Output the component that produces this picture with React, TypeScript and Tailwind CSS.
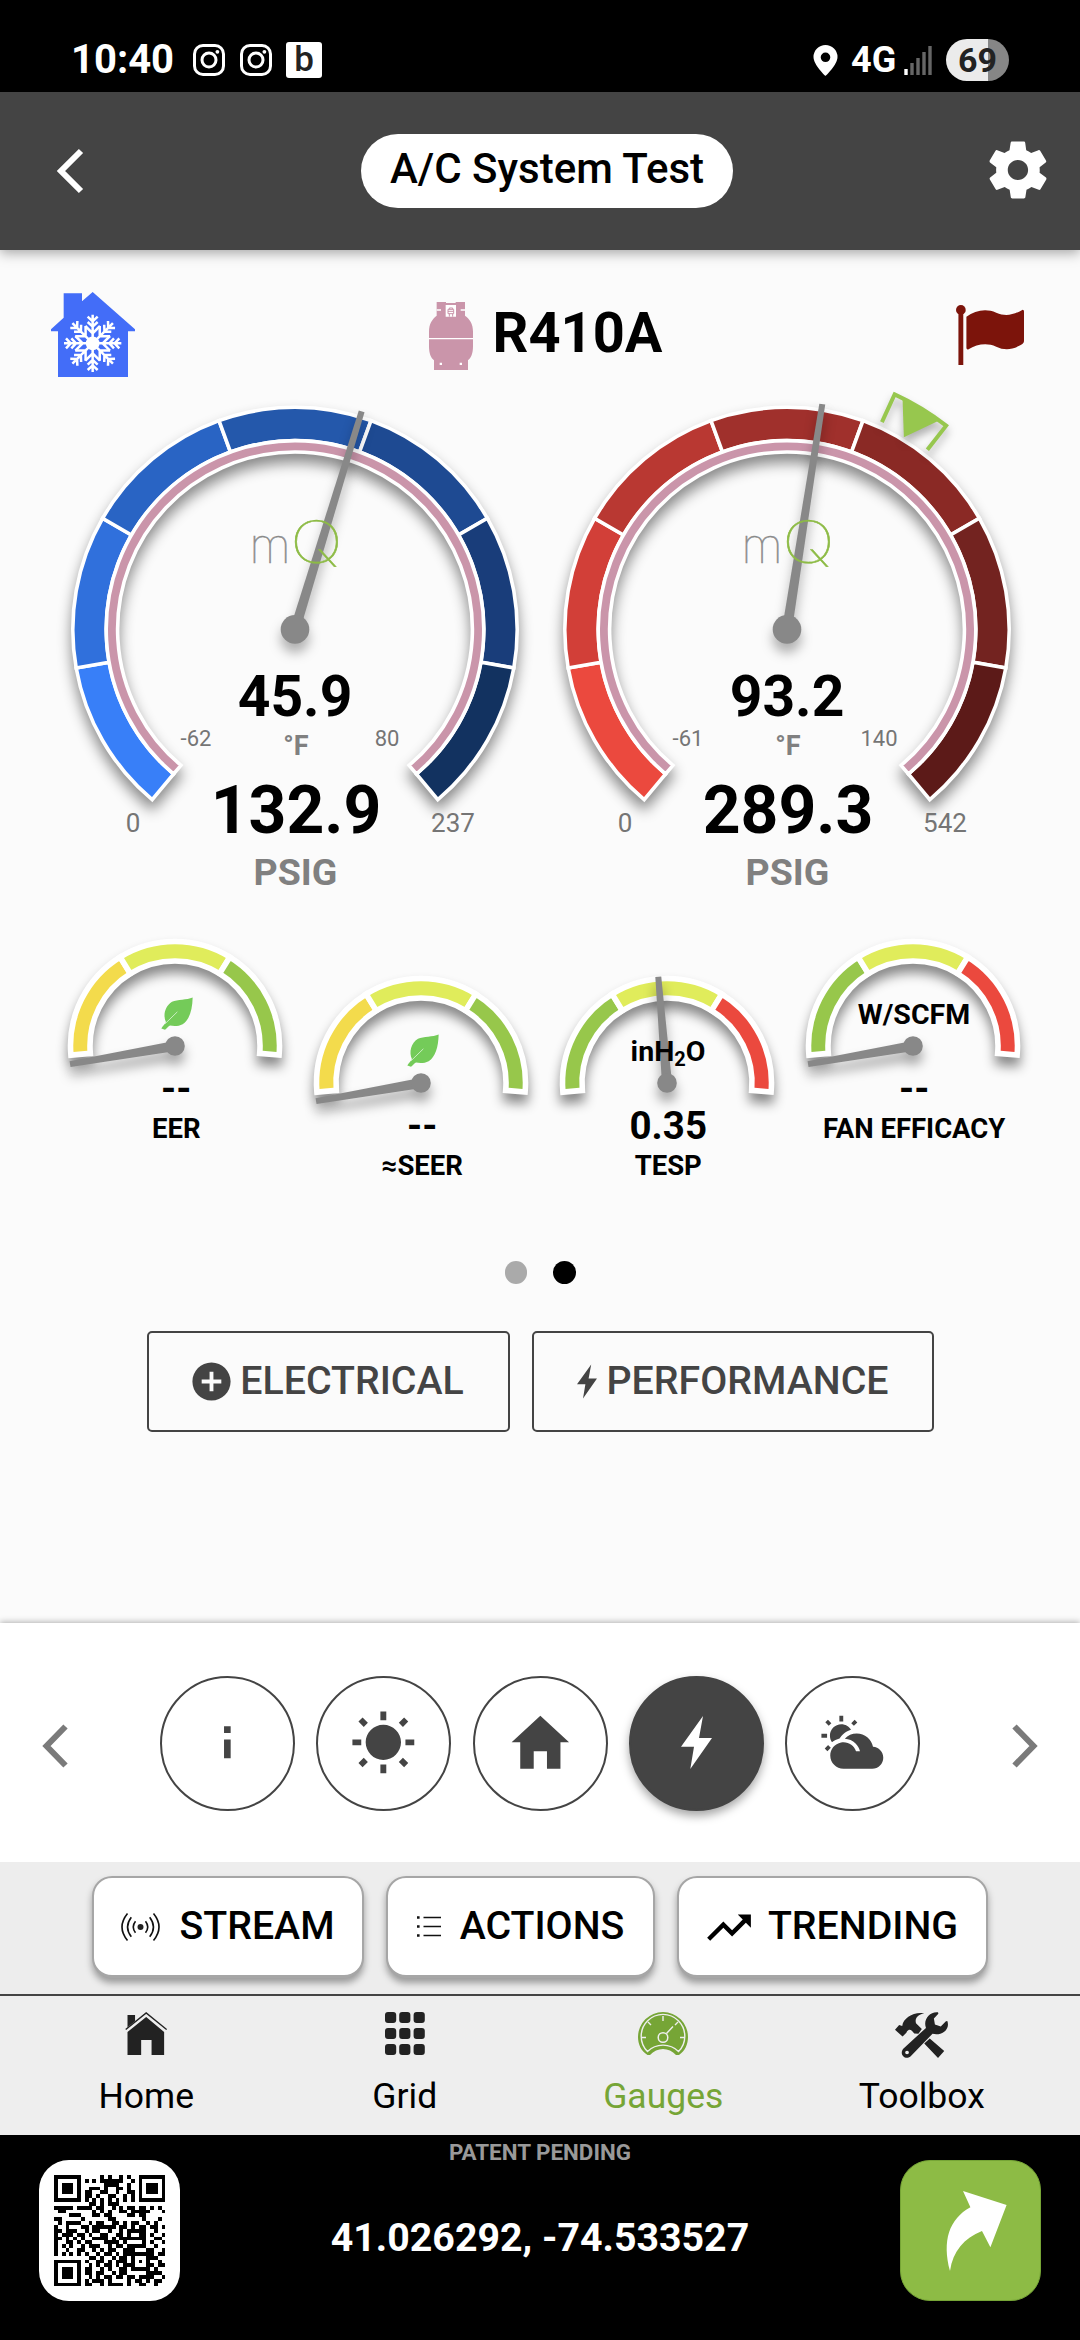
import type { ReactNode } from 'react';
import {
  IoMdAddCircle,
  IoMdHome,
  IoMdInformation,
  IoMdPartlySunny,
  IoMdSettings,
  IoMdSunny,
  IoMdTrendingUp,
} from 'react-icons/io';

const BLUES = ['#387ff8', '#3070dc', '#2964c4', '#2458ab', '#1e4a92', '#193d7a', '#123260'];
const REDS = ['#eb493e', '#d23f38', '#b93832', '#a0302c', '#8a2925', '#732320', '#5c1a18'];
const REFRIGERANT = '#ca95aa';

function polar(r: number, deg: number) {
  const a = (deg * Math.PI) / 180;
  return `${(r * Math.sin(a)).toFixed(2)} ${(-r * Math.cos(a)).toFixed(2)}`;
}

// ring segment, angles in degrees clockwise from 12 o'clock
function segment(r0: number, r1: number, from: number, to: number) {
  const large = to - from > 180 ? 1 : 0;
  return `M${polar(r1, from)} A${r1} ${r1} 0 ${large} 1 ${polar(r1, to)} L${polar(r0, to)} A${r0} ${r0} 0 ${large} 0 ${polar(r0, from)} Z`;
}

interface GaugeProps {
  colors: string[];
  angle: number;
  temp: string;
  tempMin: string;
  tempMax: string;
  pressure: string;
  max: string;
  target?: [number, number];
}

function Gauge({ colors, angle, temp, tempMin, tempMax, pressure, max, target }: GaugeProps) {
  return (
    <svg className="w-[492px] h-[530px] shrink-0 overflow-visible" viewBox="-246 -249.4 492 530" textAnchor="middle">
      <g className="drop-shadow-[0_9px_7px_rgba(0,0,0,0.45)]" stroke="#fff" strokeWidth="3.6">
        {colors.map((c, i) => (
          <path key={c} d={segment(188.8, 222.2, -140 + i * 40, -100 + i * 40)} fill={c} />
        ))}
        <path d={segment(177.4, 188.8, -140, 140)} fill={REFRIGERANT} />
      </g>
      {target && (
        <g className="drop-shadow-[0_6px_4px_rgba(0,0,0,0.3)]">
          <path
            d={`M${polar(228, target[0])} L${polar(258.5, target[0])} A258.5 258.5 0 0 1 ${polar(258.5, target[1])} L${polar(228, target[1])}`}
            fill="none"
            stroke="#97c74e"
            strokeWidth="4"
          />
          <path
            d={`M${polar(258, target[0] + 2)} A258 258 0 0 1 ${polar(258, target[1] - 2)} L${polar(225, (target[0] + target[1]) / 2)} Z`}
            fill="#97c74e"
          />
        </g>
      )}
      <g className="drop-shadow-[0_9px_6px_rgba(0,0,0,0.3)]" fill="#888">
        <path d="M-5 0 L-3 -228 L3 -228 L5 0 Z" transform={`rotate(${angle})`} />
        <circle r="14.3" />
      </g>
      <g className="font-['Inter',sans-serif] font-thin" strokeWidth="0.5">
        <text x="-25" y="-66.5" fontSize="48" fill="#8a8a8a" stroke="#8a8a8a">m</text>
        <text transform="translate(21.500 -66.500) scale(1.220 1)" fontSize="58" fill="#8dbb45" stroke="#8dbb45">Q</text>
      </g>
      <g className="font-bold">
        <text x="0" y="86.5" fontSize="57">{temp}</text>
        <text x="1" y="126" fontSize="27" fill="#808080">°F</text>
        <text x="1" y="204" fontSize="66">{pressure}</text>
        <text x="0.5" y="255.5" fontSize="37.5" fill="#808080">PSIG</text>
      </g>
      <g fill="#757575">
        <text x="-99" y="117" fontSize="22">{tempMin}</text>
        <text x="92" y="117" fontSize="22">{tempMax}</text>
        <text x="-162" y="203" fontSize="26">0</text>
        <text x="158" y="203" fontSize="26">{max}</text>
      </g>
    </svg>
  );
}

function Leaf() {
  return (
    <svg className="w-8 h-[33px]" viewBox="362 232 96 98">
      <path
        d="M457 233c-1 38-10 68-30 80-13 7-28 6-38 4-5 2-10 10-15 13l-11-4c4-8 10-12 14-19-10-20-3-48 18-61 17-8 44-5 62-13z"
        fill="#74cb59"
      />
      <path d="M374 312 411 276" stroke="#c9ecc0" strokeWidth="3" />
    </svg>
  );
}

interface MiniProps {
  colors: string[];
  angle: number;
  value: string;
  label: string;
  inner: ReactNode;
  leaf?: boolean;
  lowered?: boolean;
}

function MiniGauge({ colors, angle, value, label, inner, leaf, lowered }: MiniProps) {
  return (
    <div className={`w-[246px] flex flex-col items-center ${lowered ? 'pt-[37.3px]' : ''}`}>
      <div className="relative">
        <svg className="w-[246px] h-[126px] overflow-visible block" viewBox="-123 -112 246 126">
          <g className="drop-shadow-[0_9px_6px_rgba(0,0,0,0.45)]" stroke="#fff" strokeWidth="5.6">
            {colors.map((c, i) => (
              <path key={c} d={segment(85, 104.5, -95 + i * 63.33, -95 + (i + 1) * 63.33)} fill={c} />
            ))}
          </g>
          <g className="drop-shadow-[0_9px_6px_rgba(0,0,0,0.35)]" fill="#888">
            <path d="M-5 0 L-3 -106.5 L3 -106.5 L5 0 Z" transform={`rotate(${angle})`} />
            <circle r="9.8" />
          </g>
        </svg>
        <div className={`absolute inset-x-0 flex justify-center ${leaf ? 'top-[63.5px] pl-[3px]' : 'top-[64px] pl-0.5'}`}>
          {inner}
        </div>
      </div>
      <div className="pl-[2.5px] h-[53px] leading-[58px] text-[38.5px] font-bold">{value}</div>
      <div className="pl-[2.5px] leading-[31px] text-[27.5px] font-bold whitespace-nowrap">{label}</div>
    </div>
  );
}

function Header() {
  return (
    <>
      <div className="h-[92px] bg-black text-white flex items-center justify-between pl-[71px] pr-[71px] pt-[28px]">
        <div className="flex items-center">
          <span className="text-[40px] leading-none font-bold w-[122px]">10:40</span>
          <Insta />
          <Insta />
          <span className="w-9 h-9 bg-white text-[#222] rounded-[3px] text-[35px] leading-9 text-center font-medium">b</span>
        </div>
        <div className="flex items-center">
          <svg className="w-[25px] h-[31px] mr-[13px]" viewBox="0 0 25 31">
            <path fillRule="evenodd" fill="#fff" d="M12.5 0A12 12 0 0 0 .5 12c0 8 12 19 12 19s12-11 12-19a12 12 0 0 0-12-12zm0 7.5a4.8 4.8 0 1 1 0 9.6 4.8 4.8 0 0 1 0-9.6z" />
          </svg>
          <span className="text-[36px] leading-none font-bold w-[53px]">4G</span>
          <svg className="w-[28px] h-[29px] mr-[14px]" viewBox="0 0 28 29">
            <path d="M2 23v6" stroke="#fff" strokeWidth="3.4" />
            <path d="M8 17v12M14 12v17M20 6v23M26 0v29" stroke="#666" strokeWidth="3.4" />
          </svg>
          <span className="w-[63px] h-[42px] rounded-full bg-linear-to-r from-[#ebebeb] from-67% to-[#868686] to-67% text-[#222] text-[34px] leading-[43px] text-center font-bold">
            69
          </span>
        </div>
      </div>
      <header className="relative h-[158px] bg-[#444] flex items-center justify-between pl-[56px] pr-[27px] shadow-[0_3px_12px_rgba(0,0,0,0.35)]">
        <svg className="w-[55px] h-[46px] mt-[-1px]" viewBox="0 0 55 46" fill="none" stroke="#fff" strokeWidth="6">
          <path d="M25 3 5 23l20 20" />
        </svg>
        <h1 className="h-[74px] w-[372px] rounded-full bg-white text-black text-[42px] leading-[69px] font-medium text-center whitespace-nowrap">
          A/C System Test
        </h1>
        <IoMdSettings className="text-white size-[70px] mt-[-2px]" />
      </header>
    </>
  );
}

function Insta() {
  return (
    <svg className="size-8 mr-[14.5px]" viewBox="0 0 32 32" fill="none" stroke="#fff" strokeWidth="3">
      <rect x="1.5" y="1.5" width="29" height="29" rx="8.5" />
      <circle cx="16" cy="16" r="7" />
      <circle cx="24.4" cy="7.8" r="1.9" fill="#fff" stroke="none" />
    </svg>
  );
}

function House() {
  const arm = 'M0 0V-86M0 -66l-15 -14M0 -66l15 -14M0 -50l-15 -14M0 -50l15 -14M0 -30L22 -52M0 -30L-22 -52';
  return (
    <svg className="w-[84px] h-[85px]" viewBox="33 36 252 255">
      <path fill="#436df8" d="M71 40h55v24l32-28 127 112v6h-21v137H54V154H33v-6l38-35z" />
      <g transform="translate(158 190)" stroke="#fff" strokeWidth="7.5" fill="none">
        {[0, 45, 90, 135, 180, 225, 270, 315].map((a) => (
          <path key={a} d={arm} transform={`rotate(${a})`} />
        ))}
        <circle r="17" fill="#fff" />
      </g>
    </svg>
  );
}

function Tank() {
  return (
    <svg className="w-11 h-[68px]" viewBox="1164 66 132 204">
      <path fill={REFRIGERANT} d="M1187 66h28v3h29v-3h28v41c14 10 24 24 24 48v44c0 22-6 36-15 42v29h-102v-29c-9-6-15-20-15-42v-44c0-24 10-38 23-48z" />
      <path stroke="#fff" strokeWidth="4" d="M1164 176h132M1187 90h13M1259 90h13" />
      <path fill="#fff" d="M1214 75h31v35h-31zM1196 248h7v7h-7zM1256 248h7v7h-7z" />
      <path stroke={REFRIGERANT} strokeWidth="3" fill="none" d="M1221 101V88h17v13zM1221 94h17M1225 110v-9M1235 110v-9M1225 88v-4h10v4" />
    </svg>
  );
}

function Flag() {
  return (
    <svg className="w-[68px] h-[60px]" viewBox="1209 110 196 147" preserveAspectRatio="none" fill="#7c140b">
      <ellipse cx="1223" cy="122" rx="14" ry="12" />
      <path d="M1216 128h14v129h-14zM1239 139c25-15 55-22 86-10 28 10 50 5 75-7q5-1 5 4v73c0 5-8 9-14 11-22 10-44 11-66 2-28-10-55-6-81 7q-5 1-5-4z" />
    </svg>
  );
}

function Bolt({ className }: { className?: string }) {
  return (
    <svg className={className} viewBox="0 0 31 53" fill="currentColor">
      <path d="M22 0 0 30.800h13L9.300 53 31 22H18z" />
    </svg>
  );
}

function StreamIcon() {
  return (
    <svg className="w-[39px] h-7 mr-[19px]" viewBox="-19.5 -14 39 28" fill="none" stroke="#111" strokeWidth="1.6">
      <circle r="3" fill="#222" stroke="none" />
      <path d="M-5-5.800q-4.500 5.800 0 11.600M-9.200-9.800q-7.500 9.800 0 19.600M-13-13.500q-11 13.500 0 27M5-5.800q4.500 5.800 0 11.600M9.200-9.800q7.500 9.800 0 19.600M13-13.500q11 13.500 0 27" />
    </svg>
  );
}

function ListIcon() {
  return (
    <svg className="w-6 h-[21px] mr-[19px]" viewBox="0 0 24 21" fill="none" stroke="#111" strokeWidth="1.5">
      <path d="M6.500 1.500H24M6.500 10.500H24M6.500 19.500H24" />
      <path d="M0 1.500h2.600M0 10.500h2.600M0 19.500h2.600" strokeWidth="2.400" />
    </svg>
  );
}

const steps = [
  <IoMdInformation className="size-[70.7px]" />,
  <IoMdSunny className="size-[70.7px]" />,
  <IoMdHome className="size-[70.7px]" />,
  <Bolt className="w-[31px] h-[53px]" />,
  <IoMdPartlySunny className="size-[70.7px]" />,
];

function Chevron({ flip }: { flip?: boolean }) {
  return (
    <svg className={`w-[26px] h-11 mt-1 ${flip ? 'rotate-180' : ''}`} viewBox="0 0 26 44" fill="none" stroke="#7a7a7a" strokeWidth="6">
      <path d="M23.5 2.5 4.5 22l19 19.5" />
    </svg>
  );
}

function ActionButton({ icon, label, width }: { icon: ReactNode; label: string; width: string }) {
  return (
    <button
      className={`${width} h-[102px] rounded-[20px] bg-white border-2 border-b-3 border-[#a6a6a6] shadow-[0_5px_7px_rgba(0,0,0,0.35)] flex items-center justify-center text-[39.3px] font-medium`}
    >
      {icon}
      {label}
    </button>
  );
}

const tabs = [
  {
    label: 'Home',
    icon: (
      <svg className="w-[42px] h-[43px]" viewBox="351 98 117 127" preserveAspectRatio="none" fill="#222">
        <path d="M358 107h21v18l-21 18zM410 113l50 44v68h-35v-44h-29v44h-38v-68z" />
        <path d="m353 150 57-49 57 49" fill="none" stroke="#222" strokeWidth="4" />
      </svg>
    ),
  },
  {
    label: 'Grid',
    icon: (
      <svg className="w-10 h-[43px]" viewBox="0 0 40 43" fill="#222">
        {[0, 16, 32].map((y) => [0, 14.2, 28.6].map((x) => <rect key={`${x}-${y}`} x={x} y={y} width="11.2" height="11" rx="3" />))}
      </svg>
    ),
  },
  {
    label: 'Gauges',
    active: true,
    icon: (
      <svg className="w-[50px] h-[43px]" viewBox="0 0 50 43">
        <path fill="#76a536" d="M9.5 43C3 39 0 32 0 25a25 25 0 0 1 50 0c0 7-3 14-9 18h-3C31 35 19 35 12 43z" />
        <path fill="none" stroke="#eee" strokeWidth="1.4" d="M9.5 39.5a21.8 21.8 0 1 1 31 0C32 31 18 31 9.5 39.5zM25 4v5M4 25.5h4M42 25.5h4M10 10l3 3M40 10l-3 3M28.5 21.5 35 14.5" />
        <circle cx="25" cy="25.5" r="4.8" fill="none" stroke="#eee" strokeWidth="1.5" />
      </svg>
    ),
  },
  {
    label: 'Toolbox',
    icon: (
      <svg className="w-[53px] h-[46px]" viewBox="1033 92 154 139" preserveAspectRatio="none" fill="#222">
        <path d="m1033 146 12-15 9 3c3-25 35-44 64-38-20 4-28 17-24 30l17 17-10 15-12-1-7-8c-6-6-10-3-14 1l-2 5-11 11zM1134 172l42 38-18 21-40-44z" />
        <path
          fillRule="evenodd"
          d="m1057 203 66-63c-9-24 10-50 35-47l1 4-13 15 3 18 17 6 15-16 4-1c9 26-16 46-43 39l-62 66c-14 16-37-2-23-21zm11 6a5 5 0 1 0 0 11 5 5 0 0 0 0-11z"
        />
      </svg>
    ),
  },
];

// 29x29 modules, finder patterns included
const QR = [
  '#######.....#.#..#.#..#######',
  '#.....#.#.#.######..#.#.....#',
  '#.###.#......####..#..#.###.#',
  '#.###.#..###.#..##.#..#.###.#',
  '#.###.#.##..##..#..##.#.###.#',
  '#.....#.##.#..##..#.#.#.....#',
  '#######.#.#.#.#.#.#.#.#######',
  '.........##.#.###............',
  '#####.####.##..#.#.##.##.#.#.',
  '.##.......#.#.#..##.#####...#',
  '....###...##.##....##.##.....',
  '##.....#......##.......#...#.',
  '.#.####..#.##..##.#.##..#.#..',
  '#..#...##.######.##.#.##.##.#',
  '##.###..#.##..#..#.#####..#..',
  '#.###.##.#..##..##.#..##.#..#',
  '##.#.#.#..####.#.#######..##.',
  '#..##.#.##...####.#....#.#..#',
  '#.#.#..#.###..#.##.#####..#..',
  '#..#..##..#.#.##..###...##..#',
  '#.#.#.#.#..#.##.#.########.##',
  '.........##.#..#.##.#...###..',
  '#######.#..##.#.###.#.#.#..#.',
  '#.....#..#.#.##.#.###...##.##',
  '#.###.#.##..#.#..##.#####.#..',
  '#.###.#.##.##..#.##.....####.',
  '#.###.#..#.#.##.##.##.####..#',
  '#.....#.#.###.#....#.##.#.##.',
  '#######.##..#.####.#..##..#..',
];

export default function App() {
  return (
    <div className="w-[1080px] h-[2340px] bg-[#fbfbfb] text-black flex flex-col overflow-hidden font-['Roboto',sans-serif]">
      <Header />

      <main className="h-[1373px] shrink-0">
        <div className="h-[130px] pt-[42px] pl-[51px] pr-[56px] flex items-start justify-between">
          <House />
          <div className="flex items-start pt-[10px]">
            <Tank />
            <span className="text-[56px] leading-[62px] font-bold ml-[20px] whitespace-nowrap">R410A</span>
          </div>
          <div className="pt-[13px]">
            <Flag />
          </div>
        </div>

        <div className="flex pl-[49.4px]">
          <Gauge colors={BLUES} angle={17} temp="45.9" tempMin="-62" tempMax="80" pressure="132.9" max="237" />
          <Gauge
            colors={REDS}
            angle={8.9}
            temp="93.2"
            tempMin="-61"
            tempMax="140"
            pressure="289.3"
            max="542"
            target={[24.6, 38]}
          />
        </div>

        <div className="flex pl-[52px] pt-[23.7px] h-[350px]">
          <MiniGauge colors={['#f3db4c', '#e0ec5b', '#97c74b']} angle={-99.8} value="--" label="EER" leaf inner={<Leaf />} />
          <MiniGauge colors={['#f3db4c', '#e0ec5b', '#97c74b']} angle={-99.8} value="--" label="≈SEER" leaf lowered inner={<Leaf />} />
          <MiniGauge
            colors={['#97c74b', '#e0ec5b', '#eb493e']}
            angle={-4.7}
            value="0.35"
            label="TESP"
            lowered
            inner={
              <span className="text-[28.5px] leading-[34px] font-bold">
                inH<sub className="text-[20px]">2</sub>O
              </span>
            }
          />
          <MiniGauge
            colors={['#97c74b', '#e0ec5b', '#eb493e']}
            angle={-99.8}
            value="--"
            label="FAN EFFICACY"
            inner={<span className="text-[28.5px] leading-[34px] font-bold">W/SCFM</span>}
          />
        </div>

        <div className="flex justify-center gap-[26px] pt-px">
          <span className="size-[22.5px] rounded-full bg-[#aaa]" />
          <span className="size-[22.5px] rounded-full bg-black" />
        </div>

        <div className="flex justify-center gap-[22px] pt-[47px] text-[#444] text-[39.3px] font-medium">
          <button className="w-[363px] h-[101px] border-2 border-[#444] rounded-[5px] flex items-center justify-center pr-1">
            <IoMdAddCircle className="size-[47px] mr-[5px]" />
            ELECTRICAL
          </button>
          <button className="w-[402px] h-[101px] border-2 border-[#444] rounded-[5px] flex items-center justify-center">
            <Bolt className="w-5 h-[35px] mr-[10px]" />
            PERFORMANCE
          </button>
        </div>
      </main>

      <nav className="h-[239px] shrink-0 bg-white flex items-center justify-between pt-[2px] px-[42px] shadow-[0_-1px_6px_rgba(0,0,0,0.3)]">
        <Chevron />
        <div className="flex gap-[21.2px]">
          {steps.map((icon, i) => (
            <span
              key={i}
              className={`size-[135px] pb-[2px] rounded-full border-2 border-[#444] flex items-center justify-center ${
                i === 3 ? 'bg-[#444] text-white shadow-[0_5px_10px_rgba(0,0,0,0.35)]' : 'bg-white text-[#444]'
              }`}
            >
              {icon}
            </span>
          ))}
        </div>
        <Chevron flip />
      </nav>

      <div className="h-[134px] shrink-0 bg-[#ededed] border-b-2 border-[#444] pt-[14px] flex justify-center gap-[22px]">
        <ActionButton width="w-[272px]" label="STREAM" icon={<StreamIcon />} />
        <ActionButton width="w-[269px]" label="ACTIONS" icon={<ListIcon />} />
        <ActionButton width="w-[311px]" label="TRENDING" icon={<IoMdTrendingUp className="size-[50px] mr-[14px] ml-[-3px]" />} />
      </div>

      <div className="h-[139px] shrink-0 bg-[#eee] pl-[17px] pr-[29px] flex">
        {tabs.map((t) => (
          <div key={t.label} className={`flex-1 flex flex-col items-center text-[35.5px] ${t.active ? 'text-[#76a536]' : ''}`}>
            <div className="h-20 pt-4 flex items-start">{t.icon}</div>
            <span className="leading-10">{t.label}</span>
          </div>
        ))}
      </div>

      <footer className="h-[205px] shrink-0 bg-black text-white flex justify-between pl-[39px] pr-[39px]">
        <div className="size-[141px] mt-[25px] rounded-[30px] bg-white flex items-center justify-center">
          <svg className="size-[111.5px]" viewBox="0 0 29 29" shapeRendering="crispEdges">
            <path
              d={QR.map((row, y) => [...row].map((c, x) => (c === '#' ? `M${x} ${y}h1v1h-1z` : '')).join('')).join('')}
            />
          </svg>
        </div>
        <div className="flex flex-col items-center font-bold">
          <span className="text-[22.4px] leading-[35px] text-[#999]">PATENT PENDING</span>
          <span className="text-[39.3px] leading-[46px] pt-[45px]">41.026292, -74.533527</span>
        </div>
        <div className="size-[141px] mt-[25px] rounded-[30px] bg-[#8dbb45] border border-[#76a536]">
          <svg className="size-[139px]" viewBox="901 2161 139 139">
            <path fill="#fff" d="m963 2191 43.600 14-16.200 42.300-8.400-16.300c-18 7-29 20-32 40-8-30-1-52 20.400-63.700z" />
          </svg>
        </div>
      </footer>
    </div>
  );
}
